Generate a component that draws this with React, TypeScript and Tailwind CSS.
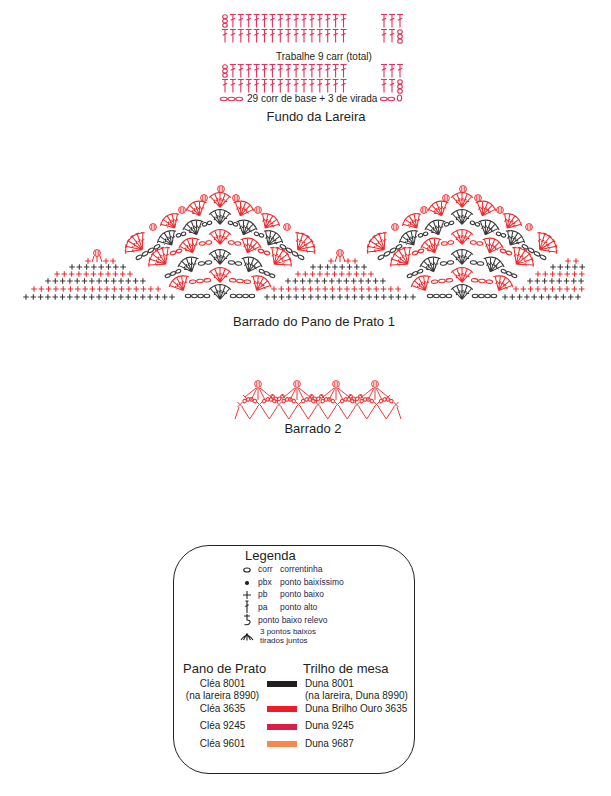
import React from "react"

const RED = "#ef2b2d"
const BLK = "#3a3a3a"
const PINK = "#e0325c"

type El = React.ReactElement
const f = (n: number) => n.toFixed(1)

function pa(x: number, y: number, h: number, color: string, key: string): El {
  return (
    <g key={key} stroke={color} strokeWidth={1.1} fill="none">
      <line x1={x} y1={y} x2={x} y2={y + h} />
      <line x1={x - 3} y1={y} x2={x + 3} y2={y} />
      <line x1={x - 2.2} y1={y + h * 0.45} x2={x + 2.2} y2={y + h * 0.28} />
    </g>
  )
}

function chainStack(x: number, y: number, h: number, color: string, key: string): El {
  const ry = h / 6
  return (
    <g key={key} stroke={color} strokeWidth={1.1} fill="none">
      {[0, 1, 2].map((i) => (
        <ellipse key={i} cx={x} cy={y + ry * (2 * i + 1)} rx={2.3} ry={ry * 0.9} />
      ))}
    </g>
  )
}

function plus(x: number, y: number, color: string, key: string): El {
  return (
    <path
      key={key}
      d={`M${f(x - 2.8)} ${y}H${f(x + 2.8)}M${f(x)} ${y - 2.8}V${y + 2.8}`}
      stroke={color}
      strokeWidth={1.1}
    />
  )
}

function plusRow(x0: number, x1: number, y: number, color: string, key: string): El[] {
  const out: El[] = []
  for (let x = x0, i = 0; x <= x1 + 0.2; x += 7.3, i++) out.push(plus(x, y, color, `${key}-${i}`))
  return out
}

function fan(cx: number, cy: number, tilt: number, color: string, key: string, big = false): El {
  const L = big ? 17 : 14.5
  const spread = big ? 50 : 42
  const n = big ? 6 : 5
  const t = (tilt * Math.PI) / 180
  const ax = Math.sin(t)
  const ay = -Math.cos(t)
  const bx = cx - (ax * L) / 2
  const by = cy - (ay * L) / 2
  let d = ""
  const tips: [number, number][] = []
  for (let i = 0; i < n; i++) {
    const a = ((tilt - spread + (2 * spread * i) / (n - 1)) * Math.PI) / 180
    const ux = Math.sin(a)
    const uy = -Math.cos(a)
    const tx = bx + ux * L
    const ty = by + uy * L
    const px = -uy
    const py = ux
    d += `M${f(bx)} ${f(by)}L${f(tx)} ${f(ty)}`
    d += `M${f(tx - px * 1.8)} ${f(ty - py * 1.8)}L${f(tx + px * 1.8)} ${f(ty + py * 1.8)}`
    const mx = bx + ux * L * 0.55
    const my = by + uy * L * 0.55
    d += `M${f(mx - px * 1.5 - ux)} ${f(my - py * 1.5 - uy)}L${f(mx + px * 1.5 + ux)} ${f(my + py * 1.5 + uy)}`
    tips.push([tx, ty])
  }
  const [s, e] = [tips[0], tips[n - 1]]
  const qx = bx + ax * L * 1.3
  const qy = by + ay * L * 1.3
  d += `M${f(s[0])} ${f(s[1])}Q${f(qx)} ${f(qy)} ${f(e[0])} ${f(e[1])}`
  return <path key={key} d={d} stroke={color} strokeWidth={1.05} fill="none" />
}

function bobble(x: number, y: number, color: string, key: string): El {
  return (
    <g key={key} stroke={color} strokeWidth={1} fill="none">
      <circle cx={x} cy={y} r={3.4} />
      <path d={`M${f(x - 1.2)} ${f(y - 2.5)}V${f(y + 2.5)}M${f(x + 1.2)} ${f(y - 2.5)}V${f(y + 2.5)}`} />
    </g>
  )
}

function chains(x1: number, y1: number, x2: number, y2: number, n: number, color: string, key: string): El {
  const dx = (x2 - x1) / n
  const dy = (y2 - y1) / n
  const len = Math.hypot(dx, dy)
  const ang = (Math.atan2(dy, dx) * 180) / Math.PI
  return (
    <g key={key} stroke={color} strokeWidth={1.1} fill="none">
      {Array.from({ length: n }, (_, i) => {
        const cx = x1 + dx * (i + 0.5)
        const cy = y1 + dy * (i + 0.5)
        return (
          <ellipse
            key={i}
            cx={f(cx)}
            cy={f(cy)}
            rx={f((len / 2) * 0.9)}
            ry={1.7}
            transform={`rotate(${f(ang)} ${f(cx)} ${f(cy)})`}
          />
        )
      })}
    </g>
  )
}

type Band = {
  color: string
  y: number
  fans: [number, number, number, boolean?][]
  chains: [number, number, number, number, number][]
  bobbles?: [number, number][]
  top?: number
}

const bands: Band[] = [
  {
    color: RED,
    y: 201,
    top: 190,
    fans: [
      [-23, 210, -22],
      [-49, 223, -32],
      [-84, 245, -48, true],
    ],
    chains: [],
    bobbles: [
      [-16, 199],
      [-38, 211],
      [-67, 228],
    ],
  },
  {
    color: BLK,
    y: 218,
    fans: [
      [-26, 229, -22],
      [-52, 240, -32],
    ],
    chains: [
      [-8, 223, -18, 226, 2],
      [-34, 234, -44, 237, 2],
      [-60, 246, -84, 260, 4],
    ],
  },
  {
    color: RED,
    y: 238,
    fans: [
      [-30, 247, -22],
      [-60, 259, -42, true],
    ],
    chains: [
      [-8, 243, -21, 245, 2],
      [-38, 251, -50, 255, 2],
    ],
  },
  {
    color: BLK,
    y: 258,
    fans: [[-31, 266, -22]],
    chains: [
      [-8, 263, -22, 265, 2],
      [-39, 271, -55, 278, 3],
    ],
  },
  {
    color: RED,
    y: 276,
    fans: [[-40, 285, -28]],
    chains: [[-9, 281, -31, 283, 3]],
  },
  {
    color: BLK,
    y: 293,
    fans: [],
    chains: [[-10, 297, -35, 297, 4]],
  },
]

function motif(cx: number, k: string): El[] {
  const out: El[] = []
  bands.forEach((b, bi) => {
    out.push(fan(cx, b.y, 0, b.color, `${k}-${bi}-c`))
    if (b.top) out.push(bobble(cx + 1, b.top, b.color, `${k}-${bi}-t`))
    ;[1, -1].forEach((sgn) => {
      b.fans.forEach(([dx, y, tl, big], i) => out.push(fan(cx + dx * sgn, y, tl * sgn, b.color, `${k}-${bi}-f${sgn}${i}`, big)))
      b.chains.forEach(([x1, y1, x2, y2, n], i) =>
        out.push(chains(cx + x1 * sgn, y1, cx + x2 * sgn, y2, n, b.color, `${k}-${bi}-c${sgn}${i}`))
      )
      b.bobbles?.forEach(([dx, y], i) => out.push(bobble(cx + dx * sgn, y, b.color, `${k}-${bi}-b${sgn}${i}`)))
    })
  })
  return out
}

function smallShell(x: number, y: number, key: string): El {
  return (
    <g key={key}>
      {bobble(x, y - 4, RED, `${key}-b`)}
      <path d={`M${x - 3} ${y - 1}L${x - 5} ${y + 5}M${x + 3} ${y - 1}L${x + 5} ${y + 5}M${x} ${y - 1}V${y + 5}`} stroke={RED} strokeWidth={1} />
    </g>
  )
}

function Barrado1() {
  const els: El[] = [
    ...plusRow(26, 172, 298, BLK, "l0"),
    ...plusRow(34, 160, 290, RED, "l1"),
    ...plusRow(48, 150, 282, BLK, "l2"),
    ...plusRow(57, 135, 275, RED, "l3"),
    ...plusRow(72, 128, 268, BLK, "l4"),
    plus(88, 262, RED, "l5a"),
    plus(106, 262, RED, "l5b"),
    plus(113, 262, RED, "l5c"),
    smallShell(97, 258, "l5s"),
    ...plusRow(267, 417, 298, BLK, "m0"),
    ...plusRow(274, 400, 290, RED, "m1"),
    ...plusRow(288, 390, 282, BLK, "m2"),
    ...plusRow(298, 377, 275, RED, "m3"),
    ...plusRow(313, 370, 268, BLK, "m4"),
    plus(331, 262, RED, "m5a"),
    plus(348, 262, RED, "m5b"),
    plus(355, 262, RED, "m5c"),
    smallShell(340, 258, "m5s"),
    ...plusRow(505, 582, 298, BLK, "r0"),
    ...plusRow(516, 582, 290, RED, "r1"),
    ...plusRow(530, 582, 282, BLK, "r2"),
    ...plusRow(538, 582, 275, RED, "r3"),
    ...plusRow(553, 582, 268, BLK, "r4"),
    plus(568, 262, RED, "r5a"),
    plus(576, 262, RED, "r5b"),
    ...motif(220, "a"),
    ...motif(462, "b"),
  ]
  return (
    <svg width={611} height={125} viewBox="0 180 611 125" className="block">
      {els}
    </svg>
  )
}

function FundoBlock({ y0 }: { y0: number }) {
  const cols = Array.from({ length: 16 }, (_, i) => 225 + i * 7.9)
  const right = [384, 392, 400]
  const r1 = y0 + 1.5
  const r2 = y0 + 16.5
  const els: El[] = []
  cols.forEach((x, i) => {
    els.push(i === 0 ? chainStack(x, r1, 13, PINK, `a${i}`) : pa(x, r1, 13, PINK, `a${i}`))
    els.push(pa(x, r2, 13, PINK, `b${i}`))
  })
  right.forEach((x, i) => {
    els.push(pa(x, r1, 13, PINK, `c${i}`))
    els.push(i === 2 ? chainStack(x, r2, 14, PINK, `d${i}`) : pa(x, r2, 13, PINK, `d${i}`))
  })
  return (
    <svg width={192} height={32} viewBox={`218 ${y0} 192 32`} className="block">
      {els}
    </svg>
  )
}

function Barrado2() {
  const c = "#f03a3c"
  const els: El[] = []
  const groups = [258, 297, 336, 375]
  groups.forEach((gx, i) => {
    els.push(bobble(gx, 385, c, `g${i}`))
    els.push(
      <path
        key={`gl${i}`}
        d={`M${gx - 2} 389L${gx - 13} 398M${gx - 1} 389L${gx - 7} 401M${gx} 389V401M${gx + 1} 389L${gx + 7} 401M${gx + 2} 389L${gx + 13} 398M${gx - 15} 396L${gx - 11} 400M${gx + 11} 400L${gx + 15} 396`}
        stroke={c}
        strokeWidth={1}
        fill="none"
      />
    )
    if (i < groups.length - 1) {
      const mx = gx + 19.5
      els.push(chains(gx + 13, 396, mx, 401, 2, c, `ch${i}a`))
      els.push(chains(mx, 401, gx + 26, 396, 2, c, `ch${i}b`))
      els.push(<line key={`jn${i}`} x1={mx} y1={401} x2={mx} y2={404} stroke={c} strokeWidth={1} />)
    }
  })
  const xs = Array.from({ length: 9 }, (_, i) => 240 + i * 19.5)
  xs.forEach((x, i) => {
    els.push(
      <path key={`x${i}`} d={`M${x - 2.5} 403L${x + 2.5} 408M${x + 2.5} 403L${x - 2.5} 408`} stroke={c} strokeWidth={1} />
    )
    if (i < xs.length - 1) {
      const nx = xs[i + 1]
      const m = (x + nx) / 2
      els.push(
        <path key={`v${i}`} d={`M${x + 2} 408L${m} 420L${nx - 2} 408`} stroke={c} strokeWidth={1} fill="none" />
      )
      els.push(chains(x + 3, 403, m, 399.5, 2, c, `ar${i}a`))
      els.push(chains(m, 399.5, nx - 3, 403, 2, c, `ar${i}b`))
    }
  })
  els.push(<path key="ends" d="M239 408L235 420M397 408L401 420" stroke={c} strokeWidth={1} />)
  return (
    <svg width={175} height={44} viewBox="230 378 175 44" className="block">
      {els}
    </svg>
  )
}

function Sym({ children }: { children: React.ReactNode }) {
  return (
    <svg width={14} height={14} viewBox="0 0 14 14" className="shrink-0">
      <g stroke="#222" strokeWidth={1.1} fill="none">
        {children}
      </g>
    </svg>
  )
}

const legend: { sym: React.ReactNode; ab?: string; text: string; h: string }[] = [
  { sym: <ellipse cx={7} cy={7} rx={3.3} ry={2} />, ab: "corr", text: "correntinha", h: "h-[13px]" },
  { sym: <circle cx={7} cy={7} r={1.5} fill="#222" />, ab: "pbx", text: "ponto baixíssimo", h: "h-[13px]" },
  { sym: <path d="M3 7H11M7 3V11" />, ab: "pb", text: "ponto baixo", h: "h-[11px]" },
  { sym: <path d="M5.5 1H8.5M7 1V13M5.3 6.5L8.7 4.8" />, ab: "pa", text: "ponto alto", h: "h-[14px]" },
  { sym: <path d="M4 3H10M7 1V7Q10.5 7 10 9.6Q9 12.5 4.5 11.5" />, text: "ponto baixo relevo", h: "h-[12px]" },
]

export default function App() {
  return (
    <div className="w-[611px] h-[796px] overflow-hidden bg-white text-[#231f20] font-['Liberation_Sans',Arial,sans-serif]">
      <div className="ml-[218px] w-[192px] pt-[13px]">
        <FundoBlock y0={13} />
        <p className="mt-[5px] pl-[58px] text-[10px] leading-[13px] whitespace-nowrap">Trabalhe 9 carr (total)</p>
        <FundoBlock y0={64} />
        <div className="-mt-[1px] flex h-[10px] items-center">
          <svg width={27} height={10} viewBox="218 95 27 10" className="shrink-0">
            {chains(220, 100, 243, 100, 3, PINK, "cl")}
          </svg>
          <span className="ml-[2px] text-[10px] leading-[10px] whitespace-nowrap">29 corr de base + 3 de virada</span>
          <svg width={24} height={10} viewBox="379 95 24 10" className="ml-[2px] shrink-0">
            {chains(380, 100, 395, 100, 2, PINK, "cr")}
            <ellipse cx={399.5} cy={99} rx={2.2} ry={3} stroke={PINK} strokeWidth={1.1} fill="none" />
          </svg>
        </div>
        <p className="mt-[5px] pl-[4px] text-center text-[13px] leading-[16px]">Fundo da Lareira</p>
      </div>

      <div className="mt-[54px]">
        <Barrado1 />
      </div>
      <p className="mt-[10px] pl-[17px] text-center text-[13px] leading-[16px]">Barrado do Pano de Prato 1</p>

      <div className="ml-[230px] mt-[47px]">
        <Barrado2 />
      </div>
      <p className="pl-[15px] text-center text-[13px] leading-[16px]">Barrado 2</p>

      <div className="ml-[173px] mt-[108px] h-[229px] w-[242px] rounded-[36px] border-[1.3px] border-[#222]">
        <p className="ml-[71px] mt-[2px] text-[13px] leading-[15px]">Legenda</p>
        <div className="ml-[66px] text-[8.5px] text-[#1c2752]">
          {legend.map((r) => (
            <div key={r.text} className={`flex items-center ${r.h}`}>
              <Sym>{r.sym}</Sym>
              {r.ab ? (
                <>
                  <span className="ml-[4px] w-[22px]">{r.ab}</span>
                  <span>{r.text}</span>
                </>
              ) : (
                <span className="ml-[4px]">{r.text}</span>
              )}
            </div>
          ))}
          <div className="flex h-[20px] items-center">
            <Sym>
              <path d="M1 11Q7 2 13 11M7 4.5L3.5 11M7 4.5V11.5M7 4.5L10.5 11" />
            </Sym>
            <div className="ml-[6px] text-[8px] leading-[9px]">
              <p>3 pontos baixos</p>
              <p>tirados juntos</p>
            </div>
          </div>
        </div>

        <div className="ml-[9px] mt-[15px] flex text-[13px] leading-[15px]">
          <span className="w-[120px]">Pano de Prato</span>
          <span>Trilho de mesa</span>
        </div>
        <div className="text-[10px] leading-[12.5px]">
          {[
            { l: ["Cléa 8001", "(na lareira 8990)"], c: "bg-[#231f20]", r: ["Duna 8001", "(na lareira, Duna 8990)"], m: "mt-[1.5px]" },
            { l: ["Cléa 3635"], c: "bg-[#ee1c25]", r: ["Duna Brilho Ouro 3635"], m: "mt-0" },
            { l: ["Cléa 9245"], c: "bg-[#d91f45]", r: ["Duna 9245"], m: "mt-[5px]" },
            { l: ["Cléa 9601"], c: "bg-[#f7874a]", r: ["Duna 9687"], m: "mt-[5px]" },
          ].map((row) => (
            <div key={row.l[0]} className={`flex items-start ${row.m}`}>
              <div className="ml-[4px] w-[89px] text-center">
                {row.l.map((t) => (
                  <p key={t}>{t}</p>
                ))}
              </div>
              <div className={`mt-[3.5px] h-[6px] w-[30px] shrink-0 ${row.c}`} />
              <div className="ml-[8px]">
                {row.r.map((t) => (
                  <p key={t} className="whitespace-nowrap">
                    {t}
                  </p>
                ))}
              </div>
            </div>
          ))}
        </div>
      </div>
    </div>
  )
}
